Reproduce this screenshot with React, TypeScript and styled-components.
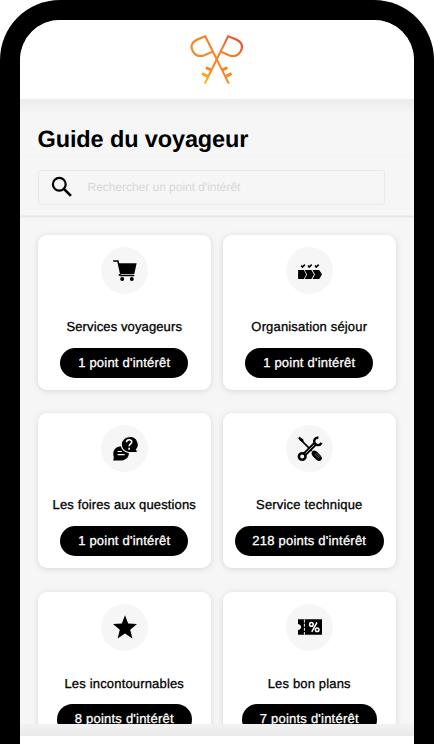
import React from 'react';
import styled, { createGlobalStyle } from 'styled-components';

const GlobalStyle = createGlobalStyle`
  *, *::before, *::after { box-sizing: border-box; }
  body { margin: 0; background: #fff; overflow: hidden; }
`;

const Phone = styled.div`
  width: 434px;
  height: 744px;
  padding: 20px 20px 0;
  background: #000;
  border-radius: 60px 60px 0 0;
  font-family: 'Liberation Sans', Arial, sans-serif;
  color: #000;
  text-rendering: geometricPrecision;
`;

const Screen = styled.div`
  display: flex;
  flex-direction: column;
  height: 724px;
  background: #f6f6f6;
  border-radius: 40px 40px 0 0;
  overflow: hidden;
`;

const Header = styled.header`
  display: flex;
  flex: none;
  justify-content: center;
  height: 79px;
  padding-top: 12px;
  background: #fff;
`;

const TitleBar = styled.div`
  flex: none;
  height: 58px;
  padding: 26px 17.5px 0;
  background: linear-gradient(#ebebeb, #f6f6f6 15px);
  border-bottom: 1px solid #f3f3f3;
`;

const Title = styled.h1`
  margin: 0;
  font-size: 23.5px;
  line-height: 28px;
  font-weight: 700;
  letter-spacing: -0.12px;
  white-space: nowrap;
`;

const SearchBar = styled.div`
  flex: none;
  height: 61px;
  padding: 13px 29px 0 17.5px;
  background: linear-gradient(#f6f6f6 58px, #e5e5e5 59px, #eaeaea 60px, #f4f4f4 61px);
`;

const SearchField = styled.label`
  display: flex;
  align-items: center;
  height: 35px;
  padding: 0 0 1px 11.5px;
  border: 1px solid #e8e8ef;
  border-radius: 3px;
`;

const SearchInput = styled.input`
  width: 220px;
  margin-left: 13.5px;
  padding: 0;
  border: 0;
  outline: 0;
  background: transparent;
  font: 12px 'Liberation Sans', Arial, sans-serif;
  letter-spacing: -0.03px;
  text-rendering: geometricPrecision;
  &::placeholder { color: #d6d6d6; opacity: 1; }
`;

const Results = styled.main`
  flex: none;
  height: 506px;
  padding: 17px 17.5px 0;
  overflow: hidden;
`;

const Grid = styled.div`
  display: grid;
  grid-template-columns: 173.5px 173.5px;
  grid-auto-rows: 155px;
  column-gap: 11.5px;
  row-gap: 23.3px;
`;

const Card = styled.article`
  display: flex;
  flex-direction: column;
  align-items: center;
  padding-top: 12px;
  background: #fff;
  border-radius: 9px;
  box-shadow: 0 1px 6px rgba(0, 0, 0, 0.13);
`;

const IconDisc = styled.div`
  display: flex;
  flex: none;
  align-items: center;
  justify-content: center;
  width: 47px;
  height: 47px;
  padding-left: 1px;
  border-radius: 50%;
  background: #f6f6f6;
`;

const CardTitle = styled.h2<{ $spacing: number }>`
  margin: 25px 0 0;
  font-size: 13px;
  line-height: 16px;
  font-weight: 400;
  letter-spacing: ${p => p.$spacing}px;
  white-space: nowrap;
  -webkit-text-stroke: 0.3px currentColor;
`;

const Pill = styled.span<{ $width: number }>`
  flex: none;
  width: ${p => p.$width}px;
  height: 30.5px;
  margin-top: 12.5px;
  border-radius: 16px;
  background: #000;
  color: #fff;
  font-size: 13px;
  line-height: 30.5px;
  letter-spacing: 0.22px;
  text-align: center;
  white-space: nowrap;
  -webkit-text-stroke: 0.3px currentColor;
`;

const FooterShade = styled.div`
  flex: none;
  height: 12px;
  background: linear-gradient(#f2f2f2, #e9e9e9);
`;

const Footer = styled.footer`
  flex: 1;
  background: #fff;
`;

const KeysLogo = () => (
  <svg width="56" height="56" viewBox="189 32 56 56" fill="none" stroke="url(#keys)" strokeWidth="2.1">
    <defs>
      <linearGradient id="keys" gradientUnits="userSpaceOnUse" x1="203" y1="84" x2="241" y2="38">
        <stop offset="0" stopColor="#fbc90e" />
        <stop offset="0.25" stopColor="#f78a22" />
        <stop offset="0.7" stopColor="#f57b28" />
        <stop offset="1" stopColor="#ef4336" />
      </linearGradient>
    </defs>
    <path d="M228.8 83.6 205.3 36.3 199 38.8C191 42 190 47 193.2 51.8C196 56 199.5 57 204.5 55.2L212.1 51.9" />
    <path d="M204.8 83.6 228.1 36.3 234.5 38.8C242.5 42 243.6 47 240.3 51.8C237.5 56 234 57 229 55.2L221.3 51.9" />
    <path strokeWidth="2.9" d="M211.7 70.1 205.8 67.6M208.2 76.6 202 73.5M221.8 70.1 227.4 67.6M225.5 76.6 231.5 73.5" />
  </svg>
);

const SearchIcon = () => (
  <svg width="24" height="24" viewBox="0 0 24 24" fill="none" stroke="#000" strokeWidth="2.2">
    <circle cx="9.3" cy="9.3" r="6.4" />
    <path d="m13.9 13.9 7 7" strokeWidth="2.7" />
  </svg>
);

const Glyph = ({ children }: { children: React.ReactNode }) => (
  <svg width="26" height="26" viewBox="0 0 26 26">{children}</svg>
);

const CartIcon = () => (
  <Glyph>
    <path d="M1.2 3.1h4.7l3 13.3H22" fill="none" stroke="#000" strokeWidth="1.5" />
    <path d="M6.6 5.2h18l-2.3 10.9H8.9z" />
    <path d="M8.1 17.6h14.2" fill="none" stroke="#000" strokeWidth="1.3" />
    <path d="M8.5 16.5H22" stroke="#ddd" strokeWidth=".8" />
    <circle cx="10.2" cy="20.9" r="2" /><circle cx="19.8" cy="20.9" r="2" />
    <circle cx="7.6" cy="17" r="1" />
  </Glyph>
);

const StepsIcon = () => (
  <Glyph>
    <path d="M1.1 11.9h5.8l2.3 4.5-2.3 4.5H1.1zM7.7 11.9h6.7l2.6 4.5-2.6 4.5H7.7l2.4-4.5zM15.5 11.9h6.7l2.8 4.5-2.8 4.5h-6.7l2.5-4.5z" />
    <path d="m4.2 7.6 1.2 1.4 2.5-2.4M11 7.6l1.2 1.4 2.5-2.4M18 7.6l1.2 1.4 2.5-2.4" fill="none" stroke="#000" strokeWidth="1.6" />
  </Glyph>
);

const QuestionsIcon = () => (
  <Glyph>
    <path d="M9.2 10.2C3.8 10.5 1 14 1.3 18.2c.1 2 .8 3 .3 4.7L1 24.6h7.7c4.6 0 8.2-3 8.2-7.3z" />
    <path d="M17.1.7a7.9 7.9 0 1 0 0 15.8h8.1v-2.1l-.8-.8A7.9 7.9 0 0 0 17.1.7z" stroke="#f6f6f6" strokeWidth="1.1" />
    <path d="M14.5 6.3c.1-3.5 5.5-3.2 5.2-.2-.2 2-2.6 2-2.6 4.2M17.1 11.7v2" fill="none" stroke="#fff" strokeWidth="1.6" />
    <path d="M5.6 15.5h4.2M5.6 18.7h7" stroke="#fff" strokeWidth="1.2" />
  </Glyph>
);

const ToolsIcon = () => (
  <Glyph>
    <path d="m3.4 3.4 11.5 11.5" fill="none" stroke="#000" strokeWidth="1.6" />
    <path d="m1.1 2.1 1.4-1.3 3.8 2.7.4 2.3-1.3.3-2.4-1.4z" />
    <path d="M15.2 15.6c1.7-2.4 4.3-.8 8.8 4.3 2.7 3.3-1.2 6.6-4 4.3-4.4-4-6.6-6-4.8-8.6z" />
    <path d="m17.8 18.1 4.2 4.2M19.6 17.2l3.8 3.8" stroke="#aaa" strokeWidth=".6" />
    <circle cx="5.2" cy="20.5" r="3.3" fill="none" stroke="#000" strokeWidth="2.6" />
    <path d="M7.4 18.5 18.2 7.7" stroke="#000" strokeWidth="4.4" />
    <path d="m8.6 17.4 8.7-8.8" stroke="#bbb" strokeWidth="1" />
    <path d="M21.4 1.5c-3.5.1-5 2.8-3.8 5.5 1.4 3 5.3 2.8 7-.1" fill="none" stroke="#000" strokeWidth="2.4" />
  </Glyph>
);

const StarIcon = () => (
  <Glyph><path d="m13 1.3 3.2 8.3 8.8.5-6.8 5.6 2.2 8.7-7.4-4.8-7.4 4.8 2.2-8.7L1 10.1l8.8-.5z" /></Glyph>
);

const TicketIcon = () => (
  <Glyph>
    <path d="M1 5.2h24v15.6H1v-4.7c4.2-.8 4.2-5.4 0-6.2z" />
    <path d="M7.4 5.5v15.3" stroke="#f6f6f6" strokeWidth="1" strokeDasharray="3 1.2" />
    <g fill="none" stroke="#fff" strokeWidth="1.5">
      <path d="m20 8.3-5.2 9.5" />
      <circle cx="14.4" cy="10.4" r="1.8" /><circle cx="20.2" cy="15.8" r="1.8" />
    </g>
  </Glyph>
);

const categories = [
  { title: 'Services voyageurs', count: "1 point d'intérêt", width: 128, spacing: 0.12, Icon: CartIcon },
  { title: 'Organisation séjour', count: "1 point d'intérêt", width: 128, spacing: 0.16, Icon: StepsIcon },
  { title: 'Les foires aux questions', count: "1 point d'intérêt", width: 128, spacing: 0.13, Icon: QuestionsIcon },
  { title: 'Service technique', count: "218 points d'intérêt", width: 149, spacing: 0.18, Icon: ToolsIcon },
  { title: 'Les incontournables', count: "8 points d'intérêt", width: 135, spacing: 0.17, Icon: StarIcon },
  { title: 'Les bon plans', count: "7 points d'intérêt", width: 135, spacing: 0.16, Icon: TicketIcon },
];

export default function App() {
  return (
    <>
      <GlobalStyle />
      <Phone>
        <Screen>
          <Header><KeysLogo /></Header>
          <TitleBar><Title>Guide du voyageur</Title></TitleBar>
          <SearchBar>
            <SearchField>
              <SearchIcon />
              <SearchInput placeholder="Rechercher un point d'intérêt" />
            </SearchField>
          </SearchBar>
          <Results>
            <Grid>
              {categories.map(({ title, count, width, spacing, Icon }) => (
                <Card key={title}>
                  <IconDisc><Icon /></IconDisc>
                  <CardTitle $spacing={spacing}>{title}</CardTitle>
                  <Pill $width={width}>{count}</Pill>
                </Card>
              ))}
            </Grid>
          </Results>
          <FooterShade />
          <Footer />
        </Screen>
      </Phone>
    </>
  );
}
